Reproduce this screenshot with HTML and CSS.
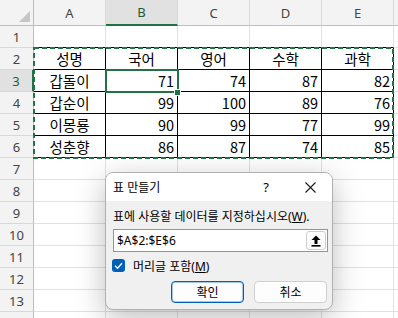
FILE: index.html
```html
<!DOCTYPE html>
<html lang="ko">
<head>
    <meta charset="UTF-8">
    <meta name="viewport" content="width=device-width, initial-scale=1.0">
    <title>표 만들기</title>
    <link rel="stylesheet" href="styles.css">
</head>
<body>
    <div class="sheet">
        <div class="grid">
            <div class="corner">
                <svg width="11" height="11" viewBox="0 0 11 11"><path d="M11 0 V11 H0 Z" fill="#c6c6c6"/></svg>
            </div>
            <div class="ch">A</div><div class="ch sel">B</div><div class="ch">C</div><div class="ch">D</div><div class="ch">E</div><div class="ch"></div>

            <div class="rh">1</div><div class="c top"></div><div class="c top"></div><div class="c top"></div><div class="c top"></div><div class="c top"></div><div class="c"></div>

            <div class="rh">2</div><div class="c t">성명</div><div class="c t">국어</div><div class="c t">영어</div><div class="c t">수학</div><div class="c t">과학</div><div class="c"></div>
            <div class="rh sel">3</div><div class="c t">갑돌이</div><div class="c n">71</div><div class="c n">74</div><div class="c n">87</div><div class="c n">82</div><div class="c"></div>
            <div class="rh">4</div><div class="c t">갑순이</div><div class="c n">99</div><div class="c n">100</div><div class="c n">89</div><div class="c n">76</div><div class="c"></div>
            <div class="rh">5</div><div class="c t">이몽룡</div><div class="c n">90</div><div class="c n">99</div><div class="c n">77</div><div class="c n">99</div><div class="c"></div>
            <div class="rh">6</div><div class="c t">성춘향</div><div class="c n">86</div><div class="c n">87</div><div class="c n">74</div><div class="c n">85</div><div class="c"></div>

            <div class="rh">7</div><div class="c"></div><div class="c"></div><div class="c"></div><div class="c"></div><div class="c"></div><div class="c"></div>
            <div class="rh">8</div><div class="c"></div><div class="c"></div><div class="c"></div><div class="c"></div><div class="c"></div><div class="c"></div>
            <div class="rh">9</div><div class="c"></div><div class="c"></div><div class="c"></div><div class="c"></div><div class="c"></div><div class="c"></div>
            <div class="rh">10</div><div class="c"></div><div class="c"></div><div class="c"></div><div class="c"></div><div class="c"></div><div class="c"></div>
            <div class="rh">11</div><div class="c"></div><div class="c"></div><div class="c"></div><div class="c"></div><div class="c"></div><div class="c"></div>
            <div class="rh">12</div><div class="c"></div><div class="c"></div><div class="c"></div><div class="c"></div><div class="c"></div><div class="c"></div>
            <div class="rh">13</div><div class="c"></div><div class="c"></div><div class="c"></div><div class="c"></div><div class="c"></div><div class="c"></div>
            <div class="rh"></div><div class="c"></div><div class="c"></div><div class="c"></div><div class="c"></div><div class="c"></div><div class="c"></div>
        </div>

        <!-- copy marquee around A2:E6 -->
        <svg class="marquee" width="361" height="112" viewBox="0 0 361 112">
            <rect x="1" y="1" width="359" height="110" fill="none" stroke="#217346" stroke-width="2" stroke-dasharray="5 3"/>
        </svg>

        <div class="active-cell"></div>
        <div class="fill-handle"></div>

        <div class="dialog">
            <div class="title-bar">
                <span class="title">표 만들기</span>
                <span class="tb-btn">?</span>
                <span class="tb-btn">
                    <svg width="11" height="11" viewBox="0 0 11 11"><path d="M0.5 0.5 L10.5 10.5 M10.5 0.5 L0.5 10.5" stroke="#1a1a1a" stroke-width="1.1"/></svg>
                </span>
            </div>
            <div class="dialog-body">
                <div class="prompt">표에 사용할 데이터를 지정하십시오(<span class="u">W</span>).</div>
                <div class="range">
                    <span>$A$2:$E$6</span>
                    <span class="collapse-btn">
                        <svg width="10" height="12" viewBox="0 0 10 12"><path d="M5 0.5 L9.5 5 H6.5 V9 H3.5 V5 H0.5 Z" fill="#000"/><rect x="0.5" y="10" width="9" height="1.6" fill="#000"/></svg>
                    </span>
                </div>
                <label class="check-row">
                    <span class="checkbox">
                        <svg width="13" height="13" viewBox="0 0 13 13"><path d="M3 6.8 L5.5 9.2 L10 4.2" fill="none" stroke="#fff" stroke-width="1.3"/></svg>
                    </span>
                    <span>머리글 포함(<span class="u">M</span>)</span>
                </label>
                <div class="buttons">
                    <button class="btn primary">확인</button>
                    <button class="btn">취소</button>
                </div>
            </div>
        </div>
    </div>
</body>
</html>
```

FILE: styles.css
```css
* {
    margin: 0;
    padding: 0;
    box-sizing: border-box;
}

body {
    width: 398px;
    height: 318px;
    overflow: hidden;
    background-color: #ffffff;
    font-family: "Noto Sans CJK KR", "Noto Sans", sans-serif;
    color: #000000;
}

.sheet {
    position: relative;
    width: 398px;
    height: 318px;
    overflow: hidden;
}

.grid {
    display: grid;
    grid-template-columns: 34px repeat(5, 72px) 1fr;
    grid-template-rows: 26px;
    grid-auto-rows: 22px;
}

.corner {
    background-color: #f3f3f3;
    border-right: 1px solid #bdbdbd;
    border-bottom: 1px solid #bdbdbd;
    display: flex;
    align-items: flex-end;
    justify-content: flex-end;
    padding: 0 3px 3px 0;
}

.ch, .rh {
    background-color: #f3f3f3;
    font-family: "Noto Sans", sans-serif;
    font-size: 13px;
    color: #444444;
    display: flex;
    align-items: center;
    justify-content: center;
}

.ch {
    border-right: 1px solid #d8d8d8;
    border-bottom: 1px solid #bdbdbd;
}

.rh {
    border-right: 1px solid #bdbdbd;
    border-bottom: 1px solid #d8d8d8;
}

.ch.sel {
    background-color: #e1e1e1;
    border-bottom: 2px solid #217346;
    color: #1b5e38;
}

.rh.sel {
    background-color: #e1e1e1;
    border-right: 2px solid #217346;
    color: #1b5e38;
}

.c {
    border-right: 1px solid #e1e1e1;
    border-bottom: 1px solid #e1e1e1;
    font-size: 14.5px;
    display: flex;
    align-items: center;
    padding: 0 3px;
}

.c.top {
    border-bottom-color: #000000;
}

.c.t {
    border-color: #000000;
    justify-content: center;
}

.c.n {
    border-color: #000000;
    justify-content: flex-end;
}

.marquee {
    position: absolute;
    left: 33px;
    top: 47px;
}

.active-cell {
    position: absolute;
    left: 105px;
    top: 69px;
    width: 74px;
    height: 24px;
    border: 2px solid #217346;
}

.fill-handle {
    position: absolute;
    left: 174px;
    top: 89px;
    width: 7px;
    height: 7px;
    background-color: #217346;
    border: 1px solid #ffffff;
}

/* dialog */
.dialog {
    position: absolute;
    left: 105px;
    top: 172px;
    width: 228px;
    height: 138px;
    background-color: #f0f0f0;
    border: 1px solid #b0b0b0;
    border-radius: 8px;
    box-shadow: 0 8px 30px rgba(0, 0, 0, 0.26);
    overflow: hidden;
    font-family: "Noto Sans", "Noto Sans CJK KR", sans-serif;
    font-size: 12px;
}

.title-bar {
    height: 28px;
    background-color: #ffffff;
    display: flex;
    align-items: center;
    padding-left: 7px;
}

.title {
    flex: 1;
}

.tb-btn {
    width: 44px;
    height: 28px;
    display: flex;
    align-items: center;
    justify-content: center;
    font-size: 13px;
}

.dialog-body {
    padding: 8px 4px 0 7px;
}

.prompt {
    line-height: 16px;
}

.u {
    text-decoration: underline;
}

.range {
    margin-top: 4px;
    width: 215px;
    height: 23px;
    background-color: #ffffff;
    border: 1px solid #949494;
    display: flex;
    align-items: center;
    justify-content: space-between;
    padding: 0 1px 0 3px;
}

.collapse-btn {
    width: 20px;
    height: 19px;
    background-color: #fbfbfb;
    border: 1px solid #cfcfcf;
    border-radius: 3px;
    display: flex;
    align-items: center;
    justify-content: center;
}

.check-row {
    margin-top: 7px;
    margin-left: -1px;
    height: 13px;
    display: flex;
    align-items: center;
    gap: 8px;
}

.checkbox {
    width: 13px;
    height: 13px;
    background-color: #005fb8;
    border-radius: 3px;
    display: flex;
}

.buttons {
    margin-top: 9px;
    display: flex;
    justify-content: flex-end;
    gap: 10px;
    padding-right: 1px;
}

.btn {
    width: 73px;
    height: 22px;
    background-color: #fdfdfd;
    border: 1px solid #d0d0d0;
    border-radius: 4px;
    font-family: "Noto Sans", "Noto Sans CJK KR", sans-serif;
    font-size: 12px;
    color: #000000;
}

.btn.primary {
    border-color: #005fb8;
    box-shadow: inset 0 0 0 1px rgba(0, 95, 184, 0.35);
}
```
